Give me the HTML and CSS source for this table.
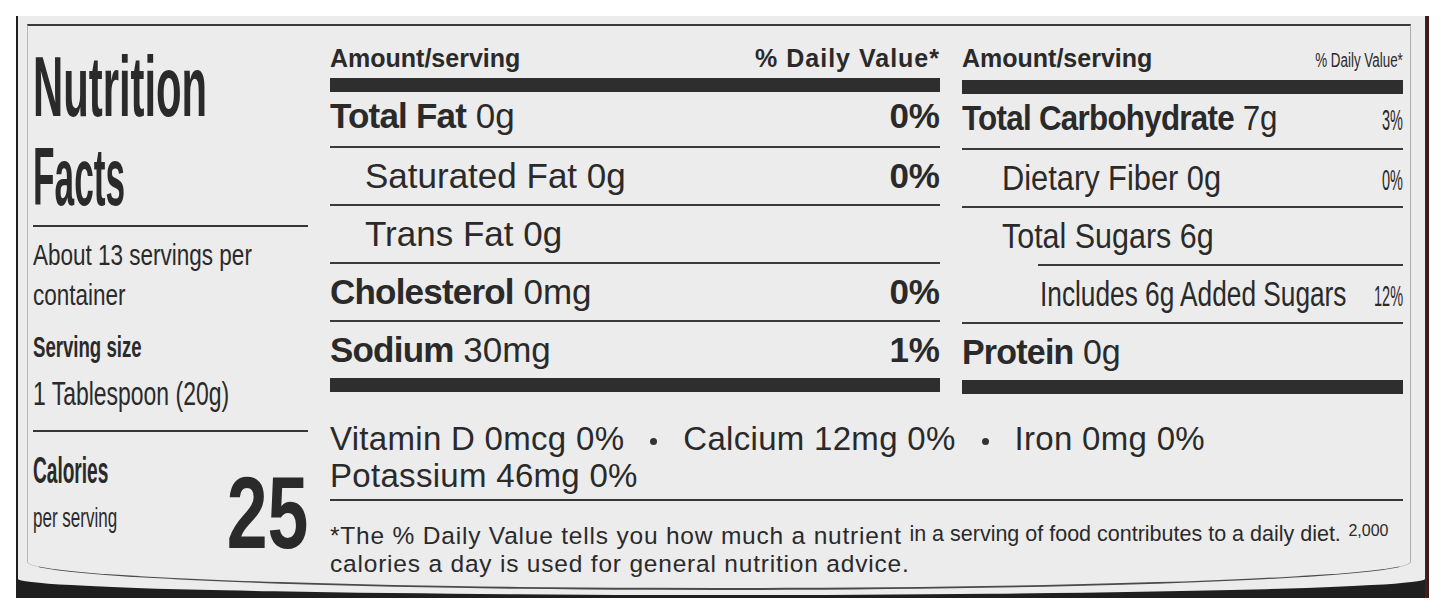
FILE: index.html
```html
<!DOCTYPE html>
<html lang="en">
<head>
<meta charset="utf-8">
<title>Nutrition Facts</title>
<link rel="stylesheet" href="styles.css">
</head>
<body>
<div class="frame">
  <div class="label">
    <div class="inner">
      <aside class="side">
        <div class="t1 sx">Nutrition</div>
        <div class="t2 sx">Facts</div>
        <div class="rule r-facts"></div>
        <div class="servings sx">About 13 servings per<br>container</div>
        <div class="ss-label sx">Serving size</div>
        <div class="ss-value sx">1 Tablespoon (20g)</div>
        <div class="rule r-serv"></div>
        <div class="cal-row">
          <div class="cal-text">
            <div class="cal-label sx">Calories</div>
            <div class="cal-sub sx">per serving</div>
          </div>
          <div class="cal-num">25</div>
        </div>
      </aside>
      <main class="main">
        <div class="tables">
          <section class="col col-m">
            <div class="head"><span>Amount/serving</span><span class="h-dv">% Daily Value*</span></div>
            <div class="bar bar-top"></div>
            <div class="row first"><span class="lbl"><b>Total Fat</b> 0g</span><span class="pct">0%</span></div>
            <div class="row"><span class="lbl ind-m">Saturated Fat 0g</span><span class="pct">0%</span></div>
            <div class="row"><span class="lbl ind-m">Trans Fat 0g</span><span class="pct"></span></div>
            <div class="row"><span class="lbl"><b>Cholesterol</b> 0mg</span><span class="pct">0%</span></div>
            <div class="row last"><span class="lbl"><b>Sodium</b> 30mg</span><span class="pct">1%</span></div>
            <div class="bar"></div>
          </section>
          <section class="col col-r">
            <div class="head"><span>Amount/serving</span><span class="h-small">% Daily Value*</span></div>
            <div class="bar bar-top"></div>
            <div class="row first"><span class="lbl s-carb"><b>Total Carbohydrate</b> 7g</span><span class="pct">3%</span></div>
            <div class="row"><span class="lbl ind-r1 s-fib">Dietary Fiber 0g</span><span class="pct">0%</span></div>
            <div class="row sub-line"><span class="lbl ind-r1 s-sug">Total Sugars 6g</span><span class="pct"></span></div>
            <div class="row"><span class="lbl ind-r2 s-add">Includes 6g Added Sugars</span><span class="pct">12%</span></div>
            <div class="row last"><span class="lbl s-pro"><b>Protein</b> 0g</span><span class="pct"></span></div>
            <div class="bar"></div>
          </section>
        </div>
        <div class="vitamins">Vitamin D 0mcg 0%<span class="dot"></span>Calcium 12mg 0%<span class="dot"></span>Iron 0mg 0%<br>Potassium 46mg 0%</div>
        <div class="rule r-vit"></div>
        <p class="foot">*The % Daily Value tells you how much a nutrient <span class="fn-mid">in a serving of food contributes to a daily diet.</span> <span class="fn-end">2,000</span><br>calories a day is used for general nutrition advice.</p>
      </main>
    </div>
  </div>
</div>
</body>
</html>
```

FILE: styles.css
```css
html, body {
  margin: 0;
  padding: 0;
  background: #ffffff;
}

body {
  font-family: "Liberation Sans", Arial, sans-serif;
  color: #2a2a2a;
  overflow: hidden;
}

.frame {
  margin: 16px 0 0 16px;
  width: 1413px;
  height: 582px;
  background: linear-gradient(to right, #1f1f1f 0, #1f1f1f 1409px, #4a1f1c 1409px, #3a1715 1413px);
}

.label {
  margin-left: 2px;
  width: 1407px;
  height: 579px;
  padding-top: 8px;
  box-sizing: border-box;
  background: #ececec;
  border-radius: 0 0 50% 50% / 0 0 16px 16px;
}

.inner {
  margin-left: 9px;
  width: 1384px;
  height: 566px;
  box-sizing: border-box;
  border-top: 2px solid #3a3a3a;
  border-left: 1px solid #b8b8b8;
  border-right: 1px solid #adadad;
  border-bottom: 2px solid #4a4a4a;
  border-radius: 0 0 50% 50% / 0 0 28px 28px;
  display: grid;
  grid-template-columns: 275px 1073px;
  column-gap: 22px;
  padding: 0 7px 0 5px;
}

/* ---------- left column ---------- */
.side {
  display: flex;
  flex-direction: column;
}

.sx {
  transform-origin: left center;
  white-space: nowrap;
}

.t1 {
  margin-top: 14px;
  font-size: 86px;
  line-height: 92px;
  font-weight: 700;
  transform: scaleX(0.486);
}

.t2 {
  font-size: 82px;
  line-height: 90px;
  font-weight: 700;
  transform: scaleX(0.43);
}

.rule {
  height: 2px;
  background: #363636;
}

.r-facts {
  margin-top: 3px;
}

.servings {
  margin-top: 8px;
  font-size: 30px;
  line-height: 40px;
  transform: scaleX(0.75);
}

.ss-label {
  margin-top: 12px;
  font-size: 30px;
  line-height: 40px;
  font-weight: 700;
  transform: scaleX(0.62);
}

.ss-value {
  margin-top: 6px;
  font-size: 34px;
  line-height: 40px;
  transform: scaleX(0.675);
}

.r-serv {
  margin-top: 17px;
}

.cal-row {
  margin-top: 19px;
  display: flex;
  justify-content: space-between;
  align-items: flex-start;
}

.cal-label {
  font-size: 36px;
  line-height: 40px;
  font-weight: 700;
  transform: scaleX(0.53);
}

.cal-sub {
  margin-top: 10px;
  font-size: 27px;
  line-height: 34px;
  transform: scaleX(0.63);
}

.cal-num {
  margin-top: 22px;
  font-size: 102px;
  line-height: 80px;
  font-weight: 700;
  transform: scaleX(0.72);
  transform-origin: right center;
}

/* ---------- main area ---------- */
.main {
  padding-top: 17px;
  display: flex;
  flex-direction: column;
}

.tables {
  display: grid;
  grid-template-columns: 610px 441px;
  column-gap: 22px;
}

.head {
  display: flex;
  justify-content: space-between;
  align-items: baseline;
  font-size: 25px;
  line-height: 30px;
  font-weight: 700;
  white-space: nowrap;
}

.h-dv {
  letter-spacing: 1px;
}

.h-small {
  font-size: 20px;
  font-weight: 400;
  transform: scaleX(0.67);
  transform-origin: right center;
}

.bar {
  height: 14px;
  background: #2e2e2e;
}

.bar-top {
  margin-top: 5px;
}

.row {
  display: grid;
  grid-template-columns: minmax(0, 1fr) auto;
  align-items: baseline;
  height: 58px;
  padding-top: 8px;
  box-sizing: border-box;
  border-bottom: 2px solid #3a3a3a;
  font-size: 35px;
  line-height: 40px;
  white-space: nowrap;
}

.row.first {
  height: 56px;
  padding-top: 4px;
}

.row.last {
  height: 56px;
  border-bottom: 0;
}

.lbl {
  transform-origin: left center;
}

.lbl b {
  letter-spacing: -0.8px;
}

.col-m .pct {
  font-weight: 700;
}

.ind-m {
  margin-left: 35px;
}

.col-r .pct {
  font-size: 29px;
  transform: scaleX(0.5);
  transform-origin: right center;
}

.ind-r1 {
  margin-left: 40px;
}

.ind-r2 {
  margin-left: 78px;
}

.s-carb { transform: scaleX(0.895); }
.s-fib { transform: scaleX(0.88); }
.s-sug { transform: scaleX(0.87); }
.s-add { transform: scaleX(0.75); }
.s-pro { transform: scaleX(0.97); }

.col-r .row.sub-line {
  border-bottom: 0;
  background: linear-gradient(#3a3a3a, #3a3a3a) no-repeat right bottom / calc(100% - 76px) 2px;
}

.vitamins {
  margin-top: 26px;
  font-size: 33px;
  line-height: 37px;
  letter-spacing: 0.3px;
  white-space: nowrap;
}

.dot {
  display: inline-block;
  width: 7px;
  height: 7px;
  border-radius: 50%;
  background: #333333;
  vertical-align: middle;
  margin: 0 26px;
}

.r-vit {
  margin-top: 5px;
}

.foot {
  margin: 21px 0 0;
  font-size: 24.5px;
  line-height: 27.5px;
  letter-spacing: 0.8px;
  white-space: nowrap;
}

.fn-mid {
  font-size: 21.5px;
  line-height: 14px;
  letter-spacing: 0;
  vertical-align: 3px;
}

.fn-end {
  font-size: 16px;
  line-height: 12px;
  letter-spacing: 0;
  vertical-align: 8px;
}
```
